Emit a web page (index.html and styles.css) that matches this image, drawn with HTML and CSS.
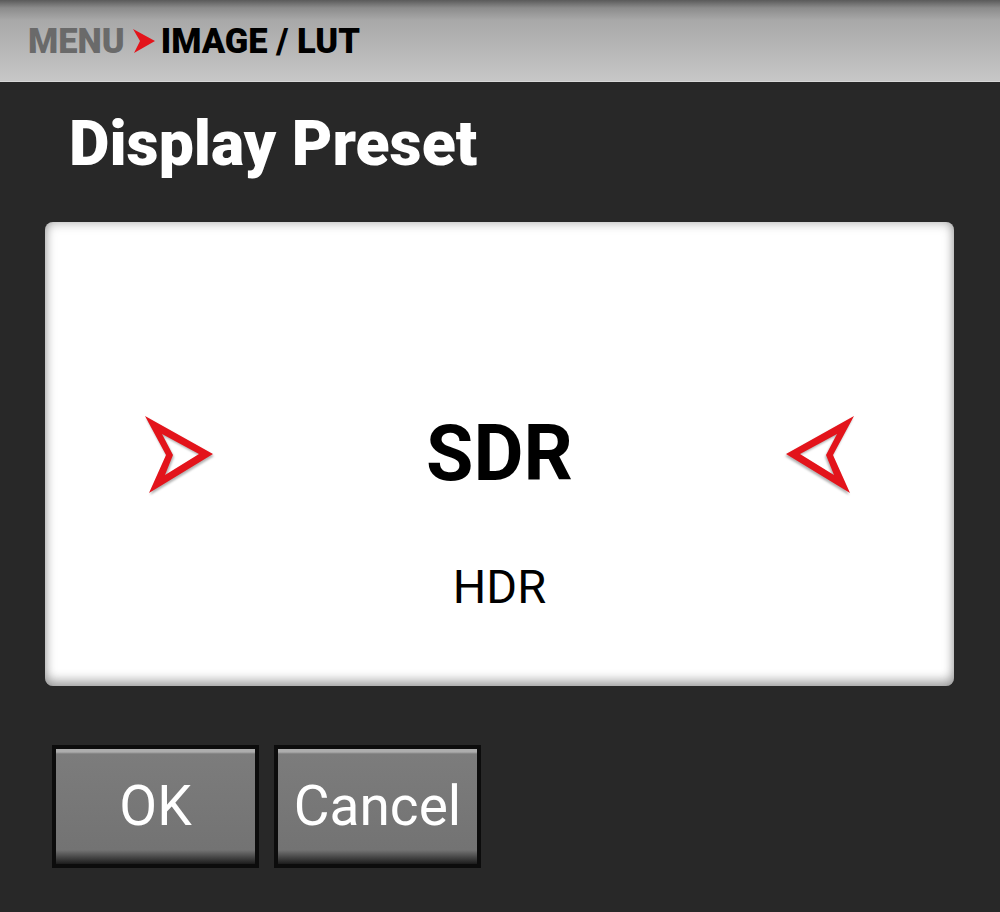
FILE: index.html
```html
<!DOCTYPE html>
<html lang="en">
<head>
    <meta charset="UTF-8">
    <meta name="viewport" content="width=device-width, initial-scale=1.0">
    <title>Display Preset</title>
    <link rel="stylesheet" href="styles.css">
</head>
<body>
    <header class="topbar">
        <span class="crumb-root">MENU</span>
        <svg class="crumb-arrow" width="24" height="26" viewBox="0 0 24 26">
            <polygon points="1,0 23,12 2,24 8,12" fill="#e3141b"/>
        </svg>
        <span class="crumb-page">IMAGE / LUT</span>
    </header>

    <main class="content">
        <h1 class="title">Display Preset</h1>

        <div class="picker">
            <div class="picker-row">
                <svg class="picker-arrow" width="74" height="84" viewBox="0 0 74 84">
                    <path d="M3 3 L71 41 L7 80 L24 42 Z M20 21 L31 42 L23 62 L57 41 Z" fill="#e3141b" fill-rule="evenodd"/>
                </svg>
                <div class="value-current">SDR</div>
                <svg class="picker-arrow flip" width="74" height="84" viewBox="0 0 74 84">
                    <path d="M3 3 L71 41 L7 80 L24 42 Z M20 21 L31 42 L23 62 L57 41 Z" fill="#e3141b" fill-rule="evenodd"/>
                </svg>
            </div>
            <div class="value-next">HDR</div>
        </div>

        <div class="actions">
            <button type="button" class="btn">OK</button>
            <button type="button" class="btn">Cancel</button>
        </div>
    </main>
</body>
</html>
```

FILE: styles.css
```css
body {
    margin: 0;
    background: #282828;
    font-family: 'Roboto', 'Liberation Sans', sans-serif;
    color: #fff;
    width: 1000px;
    height: 912px;
    overflow: hidden;
}

.topbar {
    box-sizing: border-box;
    height: 82px;
    padding: 24px 0 0 28px;
    display: flex;
    align-items: flex-start;
    background: linear-gradient(to bottom, #5a5a5a 0, #8c8c8c 8px, #a8a8a8 20px, #c6c6c6 80px);
    border-bottom: 1px solid #d8d8d8;
    font-size: 34.5px;
    font-weight: 900;
    line-height: 1;
}

.crumb-root {
    color: #6a6a6a;
}

.crumb-arrow {
    margin: 5px 5px 0 7px;
}

.crumb-page {
    color: #000;
}

.content {
    padding: 0 46px 0 45px;
}

.title {
    margin: 31px 0 0 24px;
    font-size: 62.5px;
    font-weight: 900;
    line-height: 1;
}

.picker {
    margin-top: 46px;
    height: 464px;
    box-sizing: border-box;
    padding: 191px 97px 0;
    background: #fff;
    border-radius: 8px;
    box-shadow: inset 0 0 12px rgba(0, 0, 0, 0.35), inset 0 -8px 10px rgba(0, 0, 0, 0.18);
    color: #000;
    text-align: center;
}

.picker-row {
    display: flex;
    align-items: center;
    justify-content: space-between;
}

.picker-arrow {
    filter: drop-shadow(1px 2px 1px rgba(0, 0, 0, 0.3));
}

.picker-arrow.flip {
    transform: scaleX(-1);
}

.value-current {
    font-size: 77px;
    font-weight: 700;
    line-height: 1;
}

.value-next {
    margin-top: 66px;
    font-size: 47px;
    line-height: 1;
}

.actions {
    display: flex;
    gap: 15px;
    margin: 59px 0 0 7px;
}

.btn {
    width: 207px;
    height: 123px;
    box-sizing: border-box;
    border: 4px solid #0c0c0c;
    background: linear-gradient(to bottom, #adadad 0, #adadad 3px, #7c7c7c 5px, #737373 calc(100% - 14px), #1c1c1c 100%);
    color: #fff;
    font-family: 'Roboto', 'Liberation Sans', sans-serif;
    font-size: 55px;
    line-height: 1;
    padding: 0;
    cursor: pointer;
}
```
